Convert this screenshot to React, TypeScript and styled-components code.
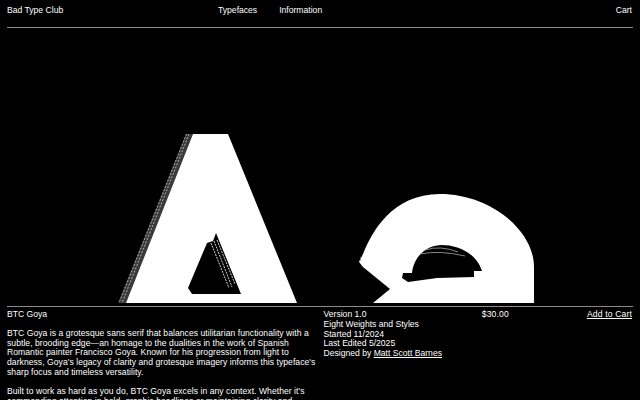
import React from "react";
import styled, { createGlobalStyle } from "styled-components";

const Global = createGlobalStyle`
  html, body { margin: 0; padding: 0; background: #000; height: 100%; overflow: hidden; }
  #root { height: 100%; }
`;

const Page = styled.div`
  height: 400px;
  overflow: hidden;
  padding: 0 7px;
  background: #000;
  color: #fff;
  font-family: "Liberation Sans", Arial, sans-serif;
  font-size: 8.6px;
  line-height: 9.75px;
`;

const Header = styled.header`
  display: grid;
  grid-template-columns: repeat(3, 1fr);
  column-gap: 7px;
  height: 28px;
  padding-top: 6px;
  box-sizing: border-box;
  border-bottom: 1px solid #8a8a8a;
`;

const Nav = styled.nav`
  display: flex;
  gap: 22px;
`;

const CartLink = styled.span`
  text-align: right;
  padding-right: 1px;
`;

const Hero = styled.div`
  height: 278px;
  margin: 0 -7px;
`;

const HeroArt = styled.svg`
  display: block;
  width: 640px;
  height: 278px;
`;

const Details = styled.section`
  display: grid;
  grid-template-columns: 1fr 1fr;
  column-gap: 7px;
  border-top: 1px solid #8a8a8a;
  padding-top: 3px;
`;

const Title = styled.div`
  margin-bottom: 9px;
`;

const Paragraph = styled.p`
  margin: 0 0 9.75px;
  letter-spacing: 0.04px;
`;

const Meta = styled.div`
  display: grid;
  grid-template-columns: 1fr 1fr;
  column-gap: 7px;
  align-items: start;
`;

const Purchase = styled.div`
  display: flex;
  justify-content: space-between;
  padding-right: 1px;
  letter-spacing: 0.15px;
`;

const Link = styled.a`
  color: inherit;
  text-decoration: underline;
  text-underline-offset: 1px;
`;

const LETTER_A =
  "M193 134 L228 134 L297 303 L126 303 Z M216 233 L213 241 L207 243 L188 288 L192 294 L241 294 Z";

const LETTER_E =
  "M373 303 L390 289 L363 267 L359 262 L363 254 C372 232 392 194 440 194 C490 194 534 230 534 267 L534 303 Z " +
  "M412 273 C414 255 428 245 442 245 C456 245 476 252 482 271 L474 271 L474 277 L437 278 L408 282 L402 278 L403 273 Z";

function LetterArt() {
  return (
    <HeroArt viewBox="0 28 640 278" aria-hidden="true">
      <path d="M186 134 L118 303 L126 303 L193 134 Z" fill="#3a3a3a" />
      <path d="M186.5 134 L119 303 M189 134 L122 303" stroke="#bbb" strokeWidth="0.9" strokeDasharray="2 1.5" fill="none" />
      <path d={LETTER_A} fill="#fff" fillRule="evenodd" />
      <path d="M211 243 L229 288 M214 241 L232 287 M217 240 L235 284" stroke="#eee" strokeWidth="0.9" strokeDasharray="2 1" fill="none" />
      <path d={LETTER_E} fill="#fff" fillRule="evenodd" />
      <path d="M425 250 Q440 245 458 252 M420 254 Q440 250 465 256" stroke="#aaa" strokeWidth="0.8" fill="none" />
      <path d="M359 262 L361 256 L361 260 Z" fill="#888" />
    </HeroArt>
  );
}

export default function App() {
  return (
    <Page>
      <Global />
      <Header>
        <span>Bad Type Club</span>
        <Nav>
          <span>Typefaces</span>
          <span>Information</span>
        </Nav>
        <CartLink>Cart</CartLink>
      </Header>
      <Hero>
        <LetterArt />
      </Hero>
      <Details>
        <div>
          <Title>BTC Goya</Title>
          <Paragraph>
            BTC Goya is a grotesque sans serif that balances utilitarian functionality with a subtle, brooding edge—an homage to the dualities in the work of Spanish Romantic painter Francisco Goya. Known for his progression from light to darkness, Goya's legacy of clarity and grotesque imagery informs this typeface's sharp focus and timeless versatility.
          </Paragraph>
          <Paragraph>
            Built to work as hard as you do, BTC Goya excels in any context. Whether it's commanding attention in bold, graphic headlines or maintaining clarity and
          </Paragraph>
        </div>
        <Meta>
          <div>
            Version 1.0
            <br />
            Eight Weights and Styles
            <br />
            Started 11/2024
            <br />
            Last Edited 5/2025
            <br />
            Designed by <Link>Matt Scott Barnes</Link>
          </div>
          <Purchase>
            <span>$30.00</span>
            <Link>Add to Cart</Link>
          </Purchase>
        </Meta>
      </Details>
    </Page>
  );
}
